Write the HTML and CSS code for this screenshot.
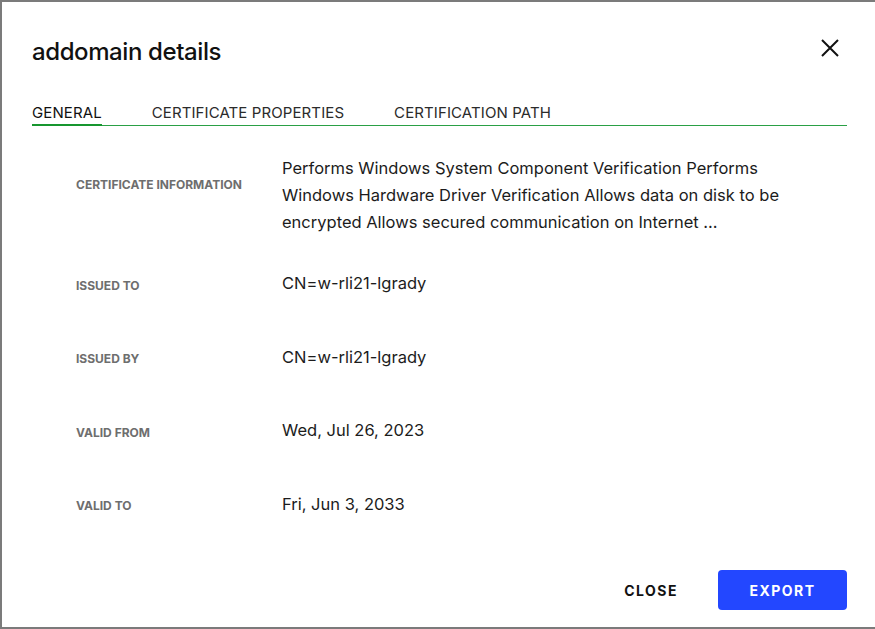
FILE: index.html
```html
<!DOCTYPE html>
<html lang="en">
<head>
<meta charset="utf-8">
<title>addomain details</title>
<link rel="stylesheet" href="styles.css">
</head>
<body>
<div class="dialog">
  <header class="head">
    <h1 class="title">addomain details</h1>
    <button class="x" aria-label="Close">
      <svg width="18" height="18" viewBox="0 0 18 18"><path d="M1 1L17 17M17 1L1 17" stroke="#111" stroke-width="2" fill="none"/></svg>
    </button>
  </header>
  <nav class="tabs">
    <span class="tab active">GENERAL</span>
    <span class="tab">CERTIFICATE PROPERTIES</span>
    <span class="tab">CERTIFICATION PATH</span>
  </nav>
  <div class="rows">
    <div class="row">
      <div class="lbl lbl-up">CERTIFICATE INFORMATION</div>
      <div class="val">Performs Windows System Component Verification Performs Windows Hardware Driver Verification Allows data on disk to be encrypted Allows secured communication on Internet ...</div>
    </div>
    <div class="row">
      <div class="lbl">ISSUED TO</div>
      <div class="val">CN=w-rli21-lgrady</div>
    </div>
    <div class="row">
      <div class="lbl">ISSUED BY</div>
      <div class="val">CN=w-rli21-lgrady</div>
    </div>
    <div class="row">
      <div class="lbl">VALID FROM</div>
      <div class="val">Wed, Jul 26, 2023</div>
    </div>
    <div class="row">
      <div class="lbl">VALID TO</div>
      <div class="val">Fri, Jun 3, 2033</div>
    </div>
  </div>
  <footer class="foot">
    <button class="btn btn-text">CLOSE</button>
    <button class="btn btn-primary">EXPORT</button>
  </footer>
</div>
</body>
</html>
```

FILE: styles.css
```css
html, body {
  margin: 0;
  padding: 0;
}
body {
  background: #7b7b7b;
  width: 875px;
  height: 629px;
  overflow: hidden;
  font-family: Inter, "Noto Sans", sans-serif;
}
.dialog {
  margin: 2px 0 0 2px;
  width: 873px;
  height: 625px;
  background: #fff;
  box-sizing: border-box;
  padding: 0 28px 17px 30px;
  display: flex;
  flex-direction: column;
}
.head {
  display: flex;
  justify-content: space-between;
  align-items: center;
  padding-top: 34px;
}
.title {
  margin: 0;
  font-size: 24px;
  line-height: 32px;
  font-weight: 450;
  color: #111;
  letter-spacing: -0.4px;
}
.x {
  border: 0;
  background: none;
  padding: 0;
  margin-right: 8px;
  margin-top: -8px;
  width: 18px;
  height: 18px;
  display: flex;
}
.tabs {
  display: flex;
  gap: 50px;
  margin-top: 35px;
  border-bottom: 1px solid #2aa045;
}
.tab {
  font-size: 15px;
  line-height: 20px;
  padding-bottom: 2px;
  color: #2b2b2b;
  letter-spacing: 0.1px;
}
.tab.active {
  color: #111;
  border-bottom: 2px solid #17962f;
  margin-bottom: -1px;
  padding-bottom: 1px;
}
.rows {
  margin-top: 18px;
  display: flex;
  flex-direction: column;
}
.row {
  display: flex;
  align-items: center;
  min-height: 73.5px;
  padding: 11px 0;
  box-sizing: border-box;
}
.lbl {
  width: 250px;
  padding-left: 44px;
  padding-top: 4px;
  box-sizing: border-box;
  font-size: 12px;
  font-weight: 700;
  color: #6e6e6e;
  letter-spacing: 0;
  line-height: 16px;
}
.lbl-up {
  padding-top: 0;
  padding-bottom: 22px;
}
.val {
  width: 500px;
  font-size: 16.5px;
  line-height: 27px;
  color: #1c1c1c;
}
.foot {
  margin-top: auto;
  display: flex;
  justify-content: flex-end;
  gap: 9px;
}
.btn {
  height: 40px;
  border: 0;
  border-radius: 4px;
  padding: 0 31px;
  font-family: Inter, "Noto Sans", sans-serif;
  font-size: 14px;
  font-weight: 700;
  letter-spacing: 1.5px;
}
.btn-text {
  background: none;
  color: #111;
}
.btn-primary {
  background: #2347ff;
  color: #fff;
  width: 129px;
  padding: 0;
}
```
